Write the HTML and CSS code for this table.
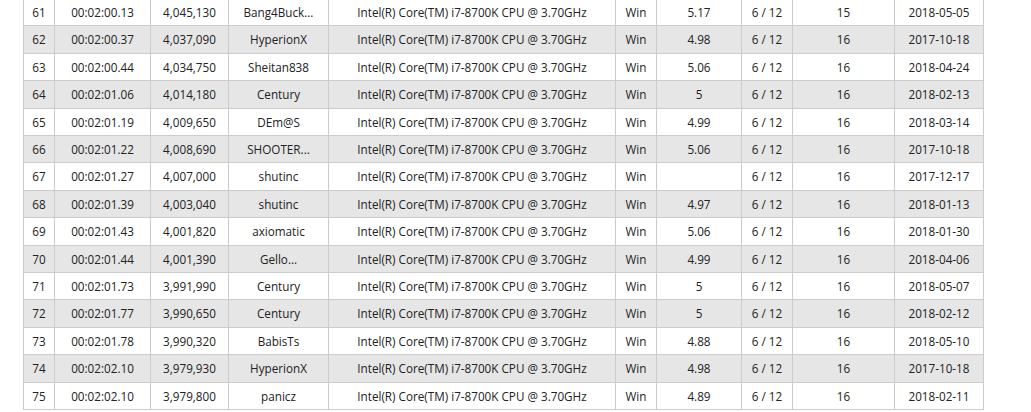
FILE: index.html
```html
<!DOCTYPE html>
<html lang="en">
<head>
    <meta charset="UTF-8">
    <meta name="viewport" content="width=device-width, initial-scale=1.0">
    <title>Ranking</title>
    <link rel="stylesheet" href="styles.css">
</head>
<body>

    <div class="board">
        <table class="ranking">
            <colgroup>
                <col class="c-rank">
                <col class="c-time">
                <col class="c-score">
                <col class="c-user">
                <col class="c-cpu">
                <col class="c-os">
                <col class="c-clock">
                <col class="c-cores">
                <col class="c-ram">
                <col class="c-date">
            </colgroup>
            <tbody>
                <tr><td>61</td><td>00:02:00.13</td><td>4,045,130</td><td>Bang4Buck...</td><td>Intel(R) Core(TM) i7-8700K CPU @ 3.70GHz</td><td>Win</td><td>5.17</td><td>6 / 12</td><td>15</td><td>2018-05-05</td></tr>
                <tr><td>62</td><td>00:02:00.37</td><td>4,037,090</td><td>HyperionX</td><td>Intel(R) Core(TM) i7-8700K CPU @ 3.70GHz</td><td>Win</td><td>4.98</td><td>6 / 12</td><td>16</td><td>2017-10-18</td></tr>
                <tr><td>63</td><td>00:02:00.44</td><td>4,034,750</td><td>Sheitan838</td><td>Intel(R) Core(TM) i7-8700K CPU @ 3.70GHz</td><td>Win</td><td>5.06</td><td>6 / 12</td><td>16</td><td>2018-04-24</td></tr>
                <tr><td>64</td><td>00:02:01.06</td><td>4,014,180</td><td>Century</td><td>Intel(R) Core(TM) i7-8700K CPU @ 3.70GHz</td><td>Win</td><td>5</td><td>6 / 12</td><td>16</td><td>2018-02-13</td></tr>
                <tr><td>65</td><td>00:02:01.19</td><td>4,009,650</td><td>DEm@S</td><td>Intel(R) Core(TM) i7-8700K CPU @ 3.70GHz</td><td>Win</td><td>4.99</td><td>6 / 12</td><td>16</td><td>2018-03-14</td></tr>
                <tr><td>66</td><td>00:02:01.22</td><td>4,008,690</td><td>SHOOTER...</td><td>Intel(R) Core(TM) i7-8700K CPU @ 3.70GHz</td><td>Win</td><td>5.06</td><td>6 / 12</td><td>16</td><td>2017-10-18</td></tr>
                <tr><td>67</td><td>00:02:01.27</td><td>4,007,000</td><td>shutinc</td><td>Intel(R) Core(TM) i7-8700K CPU @ 3.70GHz</td><td>Win</td><td></td><td>6 / 12</td><td>16</td><td>2017-12-17</td></tr>
                <tr><td>68</td><td>00:02:01.39</td><td>4,003,040</td><td>shutinc</td><td>Intel(R) Core(TM) i7-8700K CPU @ 3.70GHz</td><td>Win</td><td>4.97</td><td>6 / 12</td><td>16</td><td>2018-01-13</td></tr>
                <tr><td>69</td><td>00:02:01.43</td><td>4,001,820</td><td>axiomatic</td><td>Intel(R) Core(TM) i7-8700K CPU @ 3.70GHz</td><td>Win</td><td>5.06</td><td>6 / 12</td><td>16</td><td>2018-01-30</td></tr>
                <tr><td>70</td><td>00:02:01.44</td><td>4,001,390</td><td>Gello...</td><td>Intel(R) Core(TM) i7-8700K CPU @ 3.70GHz</td><td>Win</td><td>4.99</td><td>6 / 12</td><td>16</td><td>2018-04-06</td></tr>
                <tr><td>71</td><td>00:02:01.73</td><td>3,991,990</td><td>Century</td><td>Intel(R) Core(TM) i7-8700K CPU @ 3.70GHz</td><td>Win</td><td>5</td><td>6 / 12</td><td>16</td><td>2018-05-07</td></tr>
                <tr><td>72</td><td>00:02:01.77</td><td>3,990,650</td><td>Century</td><td>Intel(R) Core(TM) i7-8700K CPU @ 3.70GHz</td><td>Win</td><td>5</td><td>6 / 12</td><td>16</td><td>2018-02-12</td></tr>
                <tr><td>73</td><td>00:02:01.78</td><td>3,990,320</td><td>BabisTs</td><td>Intel(R) Core(TM) i7-8700K CPU @ 3.70GHz</td><td>Win</td><td>4.88</td><td>6 / 12</td><td>16</td><td>2018-05-10</td></tr>
                <tr><td>74</td><td>00:02:02.10</td><td>3,979,930</td><td>HyperionX</td><td>Intel(R) Core(TM) i7-8700K CPU @ 3.70GHz</td><td>Win</td><td>4.98</td><td>6 / 12</td><td>16</td><td>2017-10-18</td></tr>
                <tr><td>75</td><td>00:02:02.10</td><td>3,979,800</td><td>panicz</td><td>Intel(R) Core(TM) i7-8700K CPU @ 3.70GHz</td><td>Win</td><td>4.89</td><td>6 / 12</td><td>16</td><td>2018-02-11</td></tr>
            </tbody>
        </table>
    </div>

</body>
</html>
```

FILE: styles.css
```css
body {
    font-family: "Open Sans", Arial, sans-serif;
    background-color: #fff;
    color: #222;
    margin: 0;
}
.board {
    margin: -2px 0 0 23px;
}
.ranking {
    width: 960px;
    table-layout: fixed;
    border-collapse: collapse;
    font-size: 11.7px;
    line-height: 16.4px;
}
.ranking td {
    border: 1px solid #ccc;
    padding: 5px 0;
    text-align: center;
    white-space: nowrap;
    overflow: hidden;
}
.ranking tr:nth-child(even) {
    background-color: #e6e6e6;
}
/* kolon genislikleri */
.c-rank { width: 31px; }
.c-time { width: 96px; }
.c-score { width: 78px; }
.c-user { width: 100px; }
.c-cpu { width: 287px; }
.c-os { width: 41px; }
.c-clock { width: 85px; }
.c-cores { width: 51px; }
.c-ram { width: 102px; }
.c-date { width: 89px; }
```
